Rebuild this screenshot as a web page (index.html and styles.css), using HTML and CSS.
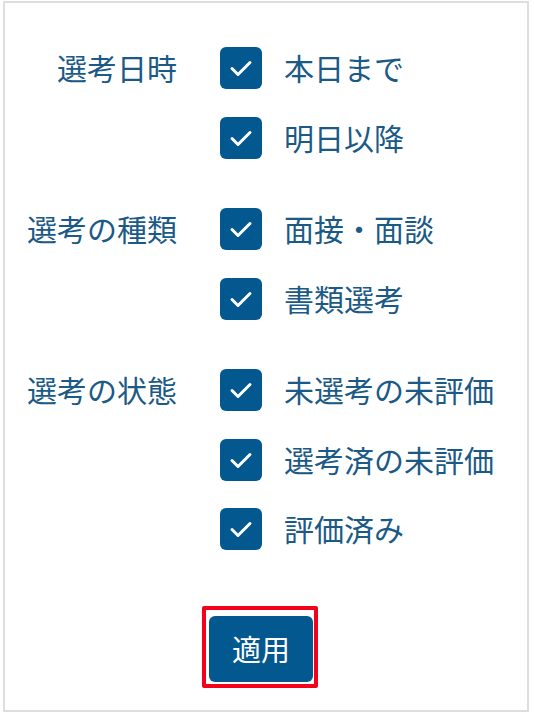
FILE: index.html
```html
<!DOCTYPE html>
<html lang="ja">
<head>
<meta charset="utf-8">
<title>選考フィルター</title>
<link rel="stylesheet" href="styles.css">
</head>
<body>
<div class="panel">
  <div class="groups">
    <div class="group">
      <div class="label">選考日時</div>
      <div class="options">
        <label class="opt"><span class="box"><svg viewBox="0 0 42 42"><path d="M12 21.5 L18 27.5 L30 15.5"/></svg></span><span class="txt">本日まで</span></label>
        <label class="opt"><span class="box"><svg viewBox="0 0 42 42"><path d="M12 21.5 L18 27.5 L30 15.5"/></svg></span><span class="txt">明日以降</span></label>
      </div>
    </div>
    <div class="group">
      <div class="label">選考の種類</div>
      <div class="options">
        <label class="opt"><span class="box"><svg viewBox="0 0 42 42"><path d="M12 21.5 L18 27.5 L30 15.5"/></svg></span><span class="txt">面接・面談</span></label>
        <label class="opt"><span class="box"><svg viewBox="0 0 42 42"><path d="M12 21.5 L18 27.5 L30 15.5"/></svg></span><span class="txt">書類選考</span></label>
      </div>
    </div>
    <div class="group">
      <div class="label">選考の状態</div>
      <div class="options">
        <label class="opt"><span class="box"><svg viewBox="0 0 42 42"><path d="M12 21.5 L18 27.5 L30 15.5"/></svg></span><span class="txt">未選考の未評価</span></label>
        <label class="opt"><span class="box"><svg viewBox="0 0 42 42"><path d="M12 21.5 L18 27.5 L30 15.5"/></svg></span><span class="txt">選考済の未評価</span></label>
        <label class="opt"><span class="box"><svg viewBox="0 0 42 42"><path d="M12 21.5 L18 27.5 L30 15.5"/></svg></span><span class="txt">評価済み</span></label>
      </div>
    </div>
  </div>
  <div class="actions">
    <div class="highlight"><button class="apply">適用</button></div>
  </div>
</div>
</body>
</html>
```

FILE: styles.css
```css
html, body {
  margin: 0;
  padding: 0;
  background: #ffffff;
}
body {
  font-family: "Noto Sans CJK JP", "Noto Sans", sans-serif;
  color: #1b5a86;
}
.panel {
  box-sizing: border-box;
  width: 526px;
  height: 711px;
  margin: 1px 0 0 3px;
  border: 2px solid #dedede;
  padding-top: 44px;
}
.groups {
  display: flex;
  flex-direction: column;
  gap: 49.5px;
}
.group {
  display: grid;
  grid-template-columns: 172px 1fr;
  column-gap: 43px;
  align-items: start;
}
.label {
  text-align: right;
  font-size: 30px;
  line-height: 40px;
  padding-bottom: 2px;
  white-space: nowrap;
}
.options {
  display: flex;
  flex-direction: column;
  gap: 27.5px;
}
.opt {
  display: flex;
  align-items: center;
  gap: 22px;
  height: 42px;
}
.box {
  width: 42px;
  height: 42px;
  border-radius: 6px;
  background: #02588f;
  flex: none;
  display: block;
}
.box svg {
  display: block;
  width: 42px;
  height: 42px;
}
.box path {
  fill: none;
  stroke: #ffffff;
  stroke-width: 3;
  stroke-linecap: round;
  stroke-linejoin: round;
}
.txt {
  font-size: 30px;
  line-height: 40px;
  padding-bottom: 2px;
  white-space: nowrap;
}
.actions {
  display: flex;
  padding-top: 56px;
  padding-left: 197px;
}
.highlight {
  border: 4px solid #f5001c;
  border-radius: 2px;
  padding: 6px 1px 2px 3px;
}
.apply {
  display: block;
  width: 104px;
  height: 66px;
  margin: 0;
  border: none;
  border-radius: 6px;
  background: #02588f;
  color: #ffffff;
  font-family: "Noto Sans CJK JP", "Noto Sans", sans-serif;
  font-size: 29px;
  padding: 0 0 2px;
}
```
